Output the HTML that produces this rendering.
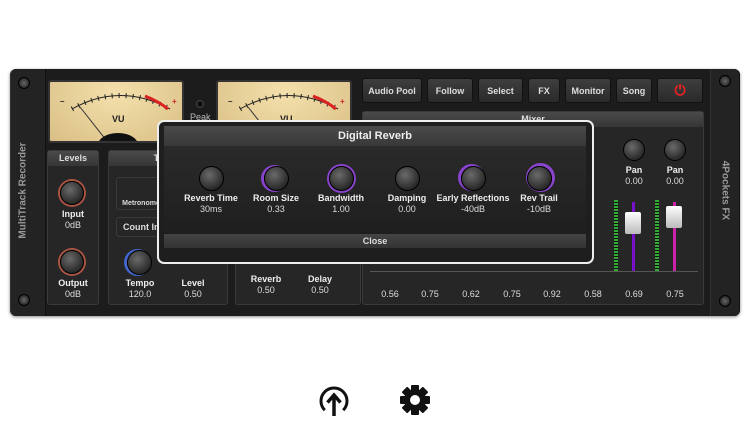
<!DOCTYPE html><html><head><style>
*{margin:0;padding:0;box-sizing:border-box}
body{width:750px;height:422px;background:#fff;position:relative;overflow:hidden;font-family:"Liberation Sans",sans-serif;font-weight:bold;color:#ddd}
.a{position:absolute}
.rack{left:10px;top:69px;width:730px;height:247px;background:#1c1c1c;border-radius:6px;box-shadow:0 1px 3px #888}
.side{background:#232323;border-left:1px solid #333;border-right:1px solid #111}
.screw{width:12px;height:12px;border-radius:50%;background:radial-gradient(#666,#111);border:1px solid #000}
.vu{background:radial-gradient(ellipse at 50% 20%,#f4e0ac,#d9bf85);border:2px solid #333;border-radius:3px;overflow:hidden}
.pan{background:#262626;border:1px solid #3a3a3a;border-radius:3px}
.ph{background:linear-gradient(#4a4a4a,#363636);font-size:9px;text-align:center;height:15px;line-height:15px;color:#ddd}
.btn{background:linear-gradient(#3e3e3e,#2a2a2a);border:1px solid #111;border-radius:3px;font-size:9px;text-align:center;line-height:24px;height:25px;top:78px;color:#ddd}
.k{border-radius:50%;background:radial-gradient(circle at 40% 35%,#6a6a6a,#2a2a2a 70%);border:1px solid #000}
.t{font-size:9px;text-align:center;width:80px;color:#eee}
.v{font-size:9px;text-align:center;width:80px;font-weight:normal;color:#ddd}
</style></head><body>
<div class="a rack"></div>
<div class="a side" style="left:10px;top:69px;width:36px;height:247px;border-radius:6px 0 0 6px"></div>
<div class="a side" style="left:710px;top:69px;width:30px;height:247px;border-radius:0 6px 6px 0"></div>
<div class="a screw" style="left:18px;top:77px"></div><div class="a screw" style="left:18px;top:294px"></div>
<div class="a screw" style="left:719px;top:75px"></div><div class="a screw" style="left:719px;top:295px"></div>
<div class="a" style="left:-37px;top:185px;width:120px;transform:rotate(-90deg);font-size:10px;color:#999;text-align:center">MultiTrack Recorder</div>
<div class="a" style="left:675px;top:185px;width:100px;transform:rotate(90deg);font-size:10px;color:#999;text-align:center">4Pockets FX</div>
<div class="a vu" style="left:48px;top:80px;width:136px;height:63px">
<svg width="136" height="63"><path d="M22 27 Q70 0 120 27" stroke="#222" fill="none" stroke-width="1"/><path d="M22 27 Q70 0 120 27" stroke="#222" fill="none" stroke-width="5" stroke-dasharray="1 6"/><path d="M95 14 Q108 19 118 27" stroke="#d22" fill="none" stroke-width="3"/><text x="10" y="22" font-size="8" fill="#222">–</text><text x="122" y="22" font-size="8" fill="#c22">+</text><line x1="30" y1="25" x2="60" y2="63" stroke="#333"/><ellipse cx="68" cy="63" rx="20" ry="12" fill="#111"/><text x="62" y="40" font-size="9" fill="#222" font-family="Liberation Sans" font-weight="bold">VU</text></svg></div>
<div class="a vu" style="left:216px;top:80px;width:136px;height:63px">
<svg width="136" height="63"><path d="M22 27 Q70 0 120 27" stroke="#222" fill="none"/><path d="M22 27 Q70 0 120 27" stroke="#222" fill="none" stroke-width="5" stroke-dasharray="1 6"/><path d="M95 14 Q108 19 118 27" stroke="#d22" fill="none" stroke-width="3"/><text x="10" y="22" font-size="8" fill="#222">–</text><text x="122" y="22" font-size="8" fill="#c22">+</text><line x1="30" y1="25" x2="60" y2="63" stroke="#333"/><text x="62" y="40" font-size="9" fill="#222" font-family="Liberation Sans" font-weight="bold">VU</text></svg></div>
<div class="a" style="left:196px;top:100px;width:8px;height:8px;border-radius:50%;background:#111;border:1px solid #444"></div>
<div class="a" style="left:190px;top:112px;font-size:9px;font-weight:normal;color:#bbb">Peak</div>
<div class="a pan" style="left:47px;top:150px;width:52px;height:155px"><div class="ph">Levels</div></div>
<div class="a k" style="left:60px;top:181px;width:24px;height:24px;box-shadow:0 0 0 2px #a54"></div>
<div class="a t" style="left:33px;top:209px">Input</div><div class="a v" style="left:33px;top:220px">0dB</div>
<div class="a k" style="left:60px;top:250px;width:24px;height:24px;box-shadow:0 0 0 2px #a54"></div>
<div class="a t" style="left:33px;top:278px">Output</div><div class="a v" style="left:33px;top:289px">0dB</div>
<div class="a pan" style="left:108px;top:150px;width:120px;height:155px"><div class="ph">Tempo</div></div>
<div class="a pan" style="left:116px;top:177px;width:50px;height:33px;font-size:7px;text-align:center;padding-top:22px">Metronome</div>
<div class="a pan" style="left:116px;top:217px;width:50px;height:20px;font-size:9px;line-height:18px;padding-left:6px">Count In</div>
<div class="a k" style="left:127px;top:250px;width:25px;height:25px;box-shadow:-2px 0 0 1px #46c"></div>
<div class="a t" style="left:100px;top:278px">Tempo</div><div class="a v" style="left:100px;top:289px">120.0</div>
<div class="a t" style="left:153px;top:278px">Level</div><div class="a v" style="left:153px;top:289px">0.50</div>
<div class="a pan" style="left:235px;top:250px;width:126px;height:55px"></div>
<div class="a t" style="left:226px;top:274px">Reverb</div><div class="a v" style="left:226px;top:285px">0.50</div>
<div class="a t" style="left:280px;top:274px">Delay</div><div class="a v" style="left:280px;top:285px">0.50</div>
<div class="a btn" style="left:362px;width:60px">Audio Pool</div>
<div class="a btn" style="left:427px;width:46px">Follow</div>
<div class="a btn" style="left:478px;width:45px">Select</div>
<div class="a btn" style="left:528px;width:32px">FX</div>
<div class="a btn" style="left:565px;width:46px">Monitor</div>
<div class="a btn" style="left:616px;width:36px">Song</div>
<div class="a btn" style="left:657px;width:46px;color:#e22;font-size:14px;line-height:22px">⏻</div>
<div class="a pan" style="left:362px;top:111px;width:342px;height:194px"><div class="ph">Mixer</div></div>
<div class="a k" style="left:623px;top:139px;width:22px;height:22px"></div>
<div class="a k" style="left:664px;top:139px;width:22px;height:22px"></div>
<div class="a t" style="left:594px;top:165px">Pan</div><div class="a v" style="left:594px;top:176px">0.00</div>
<div class="a t" style="left:635px;top:165px">Pan</div><div class="a v" style="left:635px;top:176px">0.00</div>
<div class="a" style="left:614px;top:200px;width:4px;height:72px;background:repeating-linear-gradient(#3a3 0 2px,#111 2px 3px)"></div>
<div class="a" style="left:655px;top:200px;width:4px;height:72px;background:repeating-linear-gradient(#3a3 0 2px,#111 2px 3px)"></div>
<div class="a" style="left:632px;top:202px;width:3px;height:70px;background:#71c"></div>
<div class="a" style="left:673px;top:202px;width:3px;height:70px;background:#c2a"></div>
<div class="a" style="left:625px;top:212px;width:16px;height:22px;background:linear-gradient(#fff,#bbb);border-radius:2px"></div>
<div class="a" style="left:666px;top:206px;width:16px;height:22px;background:linear-gradient(#fff,#bbb);border-radius:2px"></div>
<div class="a" style="left:370px;top:271px;width:328px;height:1px;background:#555"></div>
<div class="a v" style="left:350px;top:289px">0.56</div><div class="a v" style="left:390px;top:289px">0.75</div><div class="a v" style="left:431px;top:289px">0.62</div><div class="a v" style="left:472px;top:289px">0.75</div><div class="a v" style="left:512px;top:289px">0.92</div><div class="a v" style="left:553px;top:289px">0.58</div><div class="a v" style="left:594px;top:289px">0.69</div><div class="a v" style="left:635px;top:289px">0.75</div>
<div class="a" style="left:157px;top:120px;width:437px;height:144px;background:#1e1e1e;border:2px solid #eee;border-radius:7px"></div>
<div class="a" style="left:164px;top:126px;width:422px;height:20px;background:linear-gradient(#4a4a4a,#383838);font-size:11px;text-align:center;line-height:20px;color:#eee">Digital Reverb</div>
<div class="a" style="left:164px;top:146px;width:422px;height:86px;background:linear-gradient(#2a2a2a,#1f1f1f)"></div>
<div class="a" style="left:164px;top:234px;width:422px;height:14px;background:linear-gradient(#444,#333);font-size:9px;text-align:center;line-height:14px;color:#ddd">Close</div>
<div class="a k" style="left:199px;top:166px;width:25px;height:25px"></div>
<div class="a k" style="left:264px;top:166px;width:25px;height:25px;box-shadow:-2px 0 0 1px #84c"></div>
<div class="a k" style="left:329px;top:166px;width:25px;height:25px;box-shadow:0 0 0 2px #84c"></div>
<div class="a k" style="left:395px;top:166px;width:25px;height:25px"></div>
<div class="a k" style="left:461px;top:166px;width:25px;height:25px;box-shadow:-2px -1px 0 1px #84c"></div>
<div class="a k" style="left:527px;top:166px;width:25px;height:25px;box-shadow:1px -1px 0 2px #84c"></div>
<div class="a t" style="left:171px;top:193px">Reverb Time</div><div class="a v" style="left:171px;top:204px">30ms</div>
<div class="a t" style="left:236px;top:193px">Room Size</div><div class="a v" style="left:236px;top:204px">0.33</div>
<div class="a t" style="left:301px;top:193px">Bandwidth</div><div class="a v" style="left:301px;top:204px">1.00</div>
<div class="a t" style="left:367px;top:193px">Damping</div><div class="a v" style="left:367px;top:204px">0.00</div>
<div class="a t" style="left:423px;top:193px;width:100px">Early Reflections</div><div class="a v" style="left:433px;top:204px">-40dB</div>
<div class="a t" style="left:499px;top:193px">Rev Trail</div><div class="a v" style="left:499px;top:204px">-10dB</div>
<svg class="a" style="left:316px;top:383px" width="36" height="36" viewBox="0 0 36 36"><path d="M8.8 27.2 A13 13 0 1 1 27.2 27.2" fill="none" stroke="#111" stroke-width="3"/><path d="M18 33 V13 M11.5 19.5 L18 12 L24.5 19.5" fill="none" stroke="#111" stroke-width="3.5"/></svg>
<svg class="a" style="left:398px;top:383px" width="34" height="34" viewBox="0 0 34 34"><g fill="#111"><circle cx="17" cy="17" r="11"/><g id="g"><rect x="13" y="2" width="8" height="30" rx="1"/></g><use href="#g" transform="rotate(45 17 17)"/><use href="#g" transform="rotate(90 17 17)"/><use href="#g" transform="rotate(135 17 17)"/></g><circle cx="17" cy="17" r="5" fill="#fff"/></svg>
</body></html>
